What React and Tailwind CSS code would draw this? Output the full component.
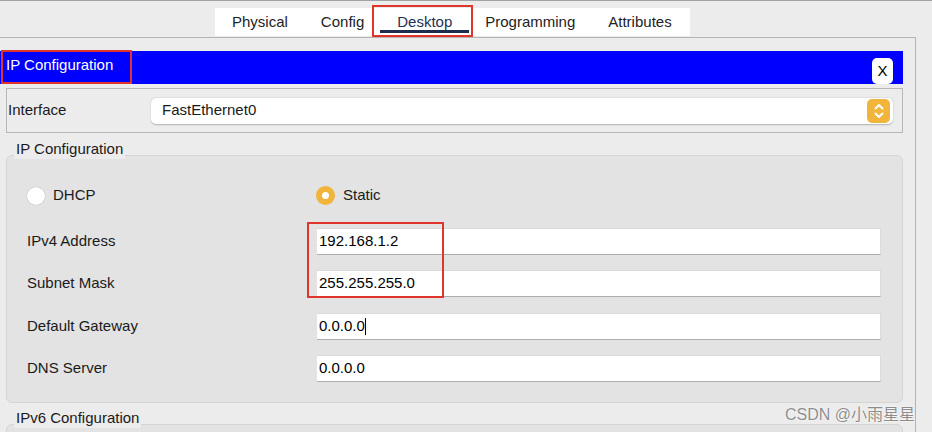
import React from 'react';

const font = { fontFamily: '"Liberation Sans", Arial, "Noto Sans CJK SC", sans-serif' };

const Field = ({ label, value, cursor, className }) => (
  <div className={`flex items-center h-[27px] ${className}`}>
    <div className="w-[310px] pl-[20px] text-[15px] text-[#1a1a1a]">{label}</div>
    <div className="flex items-center w-[564px] h-[27px] bg-white border-t border-[#d9d9d9] border-b border-b-[#adadad] border-r border-r-[#dcdcdc] pl-[2px] text-[15px] text-black">
      {value}
      {cursor && <span className="inline-block w-px h-[17px] bg-black" />}
    </div>
  </div>
);

const App = () => {
  return (
    <div style={font} className="relative w-[932px] h-[432px] overflow-hidden bg-[#ececec] border-t border-[#a3a3a3]">
      {/* Tabs */}
      <div className="h-[36px] pt-[7px] pl-[215px]">
        <div className="flex h-[28px] w-[475px] items-center gap-[33px] px-[17px] bg-white text-[15px] text-[#222]">
          <div>Physical</div>
          <div>Config</div>
          <div className="relative text-[#1f2f55]">
            Desktop
            <div className="absolute left-[-17px] right-[-17px] top-[19px] h-[3px] bg-[#1d2d4d]" />
            <div className="absolute left-[-25px] right-[-21px] top-[-6px] h-[32px] border-2 border-[#e0352b]" />
          </div>
          <div>Programming</div>
          <div>Attributes</div>
        </div>
      </div>

      {/* Content panel */}
      <div className="w-[916px] h-[400px] border-t border-r border-[#b3b3b3] pt-[13px] pr-[12px]">
        {/* Title bar */}
        <div className="flex items-start justify-between h-[33px] bg-[#0000ff]">
          <div className="h-[34px] -mt-px w-[131px] ml-px border-2 border-[#e0352b] pl-[3px] pt-[2px] text-[15px] text-white">
            IP Configuration
          </div>
          <div className="mt-[7px] mr-[10px] flex items-center justify-center w-[21px] h-[26px] rounded-[5px] bg-white text-[15px] text-black">
            X
          </div>
        </div>

        {/* Interface */}
        <div className="mt-[4px] ml-[6px] flex items-center h-[45px] border border-[#b7b7b7] pl-[1px] pr-[9px]">
          <div className="w-[143px] text-[15px] text-[#1a1a1a]">Interface</div>
          <div className="flex flex-1 items-center justify-between h-[26px] rounded-[5px] bg-white shadow-[0_0.5px_1.5px_rgba(0,0,0,0.25)] pl-[11px] pr-[3px] text-[15px] text-[#1a1a1a]">
            FastEthernet0
            <div className="flex items-center justify-center w-[23px] h-[24px] rounded-[5px] bg-[#f1b53c]">
              <svg width="12" height="18" viewBox="0 0 12 18" fill="none" stroke="white" strokeWidth="2" strokeLinecap="round" strokeLinejoin="round">
                <path d="M2.5 6.5 L6 3 L9.5 6.5" />
                <path d="M2.5 11.5 L6 15 L9.5 11.5" />
              </svg>
            </div>
          </div>
        </div>

        {/* IP Configuration group */}
        <div className="mt-[5px] ml-[14px] h-[22px] text-[15px] text-[#1a1a1a] leading-[22px]">
          <span className="relative z-10 bg-[#ececec] px-[2px] py-[2px]">IP Configuration</span>
        </div>
        <div className="relative -mt-[5px] ml-[6px] h-[248px] rounded-[6px] border border-[#d5d5d5] bg-[#e3e3e3] pt-[26px]">
          <div className="flex items-center h-[27px] text-[15px] text-[#1a1a1a]">
            <div className="flex items-center w-[309px] pl-[20px]">
              <span className="w-[18px] h-[18px] rounded-full bg-white shadow-[0_0_1px_rgba(0,0,0,0.35)]" />
              <span className="ml-[8px]">DHCP</span>
            </div>
            <div className="flex items-center">
              <span className="flex items-center justify-center w-[19px] h-[19px] rounded-full bg-[#f1b53c]">
                <span className="w-[7px] h-[7px] rounded-full bg-white" />
              </span>
              <span className="ml-[8px]">Static</span>
            </div>
          </div>
          <Field className="mt-[19px]" label="IPv4 Address" value="192.168.1.2" />
          <Field className="mt-[15px]" label="Subnet Mask" value="255.255.255.0" />
          <Field className="mt-[16px]" label="Default Gateway" value="0.0.0.0" cursor />
          <Field className="mt-[15px]" label="DNS Server" value="0.0.0.0" />
          <div className="absolute left-[300px] top-[66px] w-[137px] h-[76px] border-2 border-[#e0352b]" />
        </div>

        {/* IPv6 Configuration group */}
        <div className="mt-[4px] ml-[14px] h-[22px] text-[15px] text-[#1a1a1a] leading-[22px]">
          <span className="relative z-10 bg-[#ececec] px-[2px] py-[2px]">IPv6 Configuration</span>
        </div>
        <div className="ml-[6px] -mt-[5px] h-[40px] rounded-[6px] border border-[#d5d5d5] bg-[#e3e3e3]" />
      </div>

      {/* watermark */}
      <div className="absolute right-[17px] top-[402px] text-[16px] text-[#8d8d8d] [text-shadow:0_0_2px_#fff,0_0_1px_#fff]">
        CSDN @小雨星星
      </div>
    </div>
  );
};

export default App;
